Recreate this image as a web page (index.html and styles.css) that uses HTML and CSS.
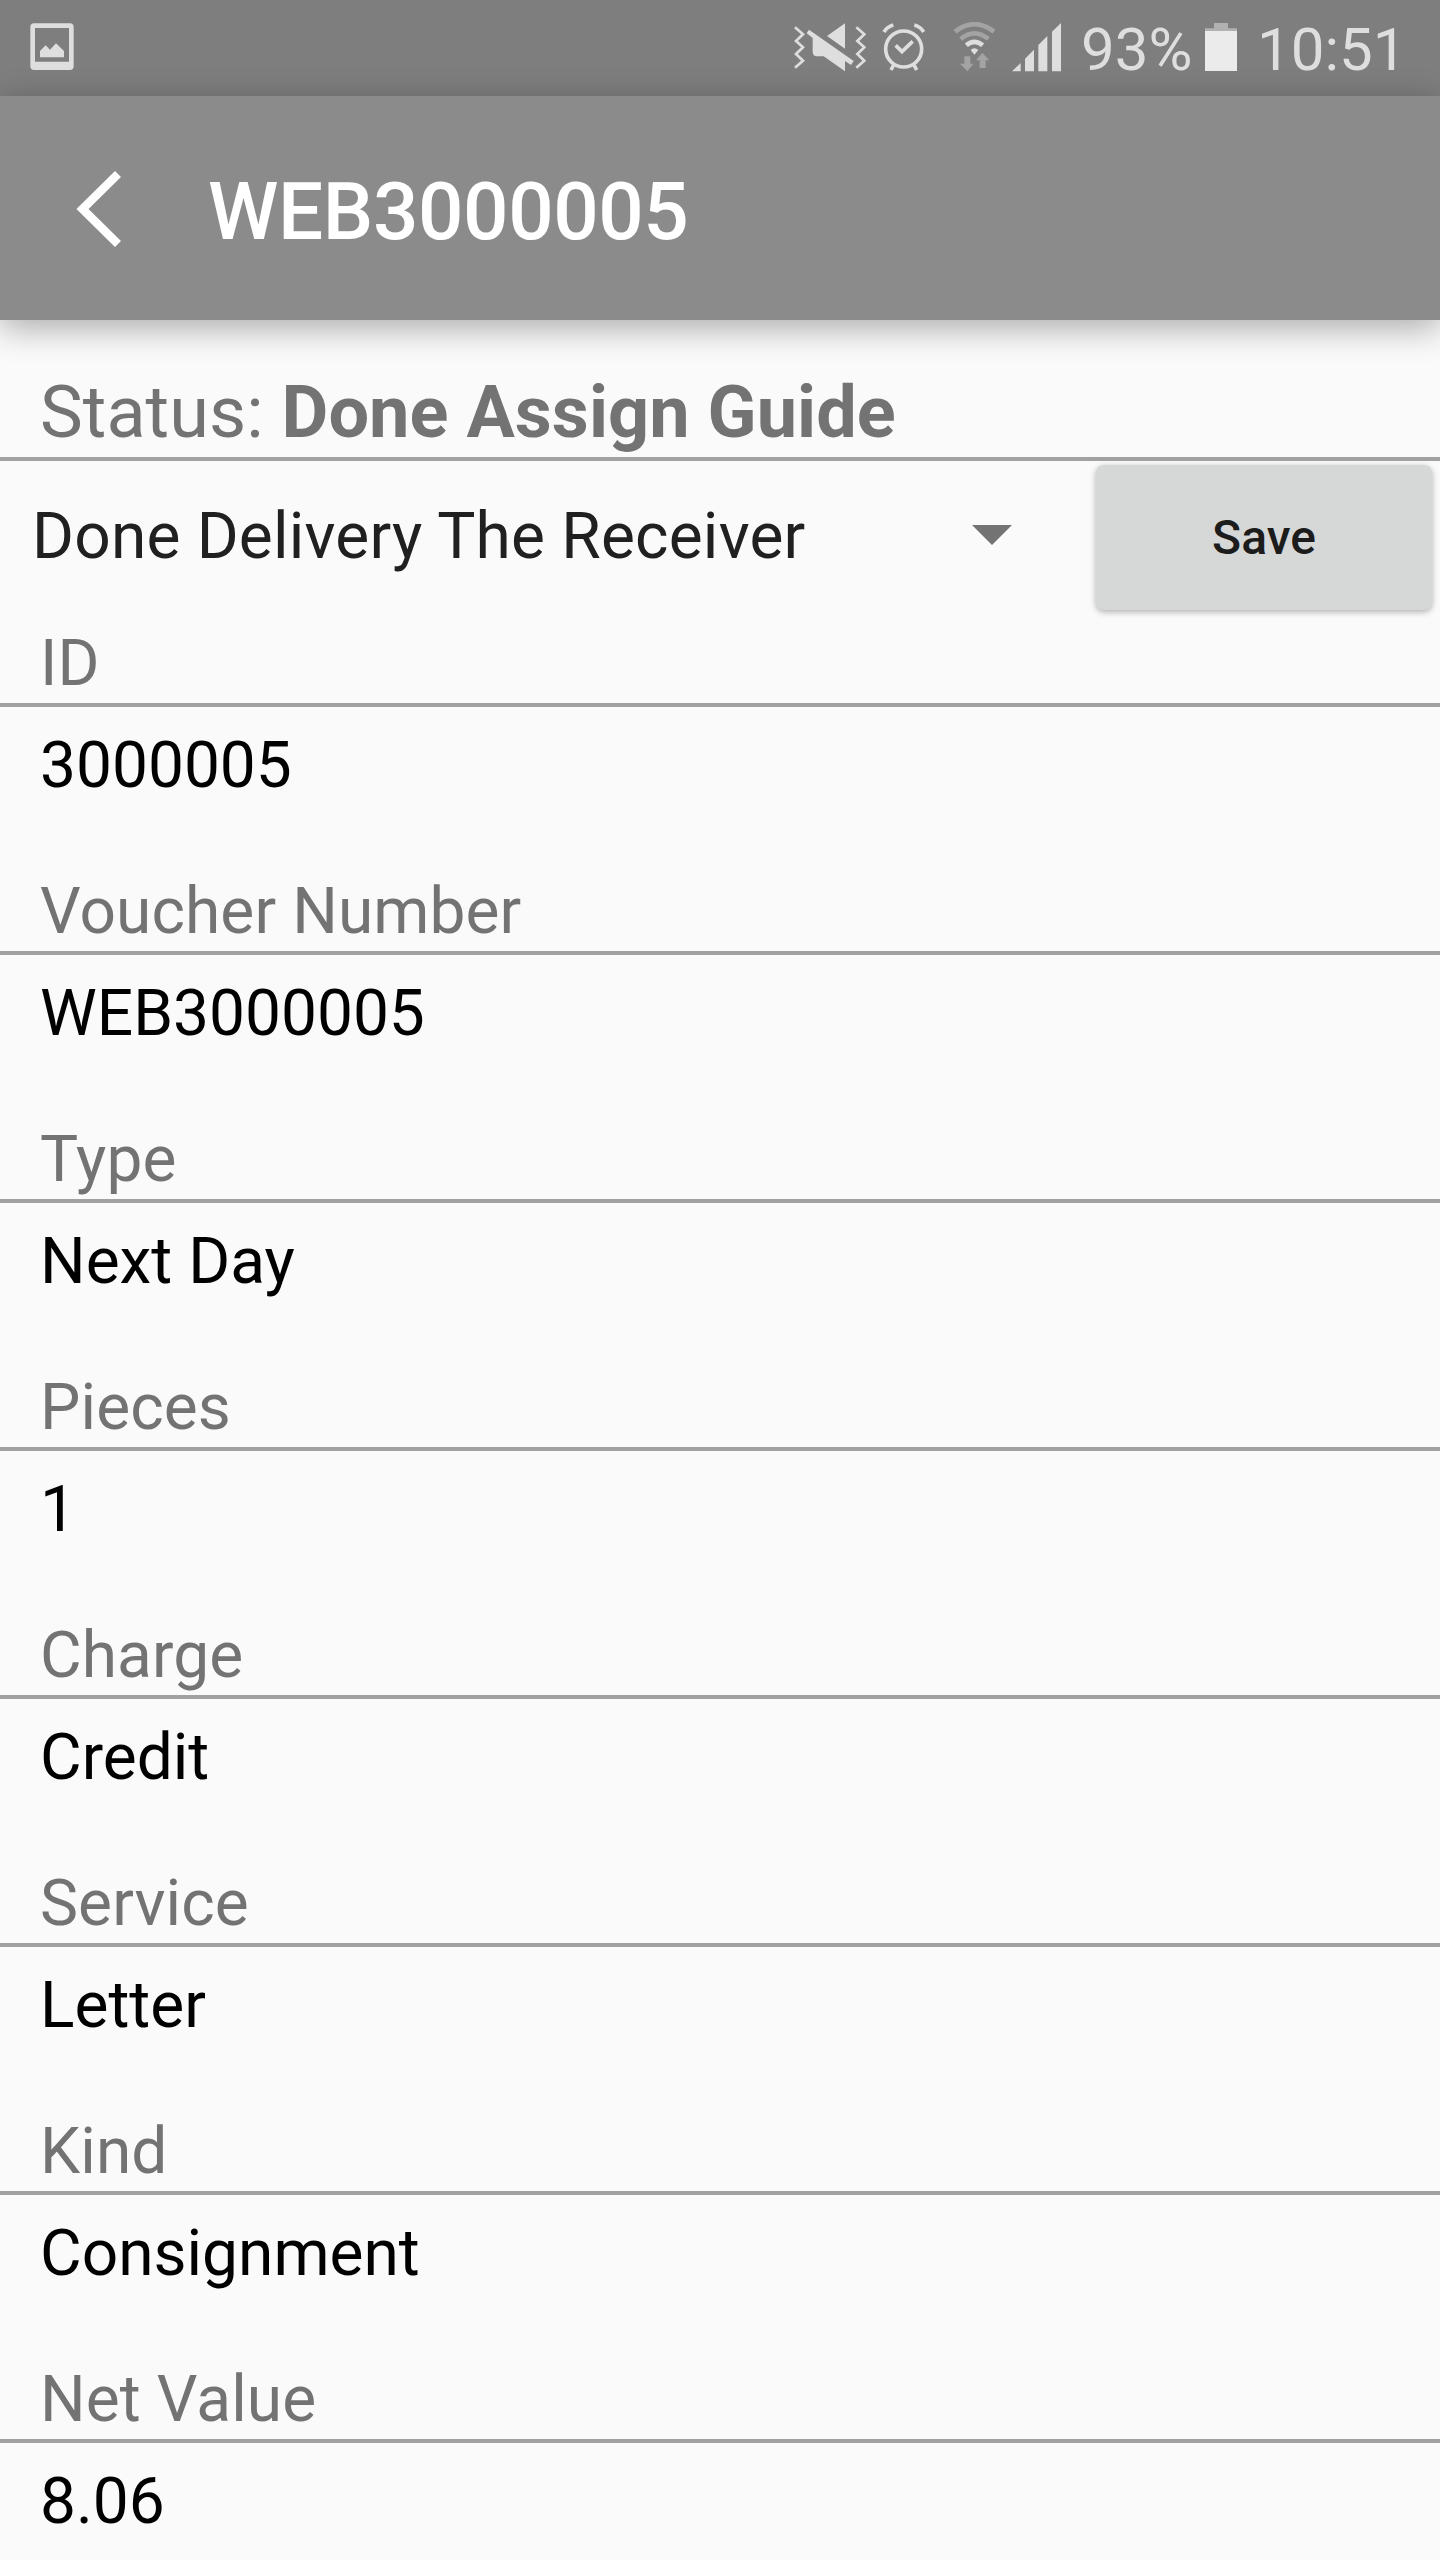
FILE: index.html
```html
<!DOCTYPE html>
<html lang="en">
<head>
    <meta charset="UTF-8">
    <meta name="viewport" content="width=device-width, initial-scale=1.0">
    <title>WEB3000005</title>
    <link rel="stylesheet" href="styles.css">
</head>
<body>
    <div class="status-bar">
        <svg class="icon-picture" width="44" height="48" viewBox="0 0 132 144">
            <path fill-rule="evenodd" d="M12 1H120Q131 1 131 12V130Q131 141 120 141H12Q1 141 1 130V12Q1 1 12 1ZM15 15V116H117V15Z"/>
            <path d="M30 103V84L47 67L60 80L78 61L102 84V103Z"/>
        </svg>
        <div class="status-right">
            <!-- muted / vibrate -->
            <svg class="icon-mute" width="72" height="49" viewBox="0 0 216 147">
                <path class="line" d="M3 13L27 34L6 54L27 73L6 93L27 113L3 134"/>
                <path class="line" d="M187 13L211 34L190 54L211 73L190 93L211 113L187 134"/>
                <path d="M153 1V77L99 39Z"/>
                <path d="M45 20L179 114L171 126L153 114V145L89 100H68Q56 98 56 86V45L38 31Z"/>
            </svg>
            <!-- alarm -->
            <svg class="icon-alarm" width="44" height="49" viewBox="0 0 132 147">
                <circle class="line-thick" cx="65" cy="78" r="54"/>
                <path class="line-thick" d="M41 67L60 86L92 55M35 126L27 141M96 126L104 141"/>
                <path class="line-thick" d="M6 27Q15 11 34 6M125 27Q116 11 97 6"/>
            </svg>
            <!-- wifi -->
            <svg class="icon-wifi" width="44" height="50" viewBox="0 0 132 150">
                <g class="dim-line">
                    <path d="M6 29Q64 -16 123 29"/>
                    <path d="M23 51Q64 17 106 51"/>
                </g>
                <path class="arc" d="M40 70Q64 49 89 70"/>
                <path d="M53 84Q64 74 76 84L64 98Z"/>
                <g class="dim">
                    <path d="M34 103H52V125H62L43 148L21 125H34Z"/>
                    <path d="M80 138V115H69L88 92L109 115H98V138Z"/>
                </g>
            </svg>
            <!-- mobile signal -->
            <svg class="icon-signal" width="50" height="49" viewBox="0 0 150 147">
                <path d="M0 145L26 120V145ZM39 145V107L66 80V145ZM79 145V66L106 39V145ZM120 145V26L147 0V145Z"/>
            </svg>
            <span class="battery-text">93%</span>
            <svg class="icon-battery" width="32" height="48" viewBox="0 0 96 144">
                <path class="battery-top" d="M27 0H69V16H96V26H0V16H27Z"/>
                <path class="battery-fill" d="M0 24H96V144H0Z"/>
            </svg>
            <span class="clock">10:51</span>
        </div>
    </div>

    <div class="app-bar">
        <svg class="icon-back" width="46" height="78" viewBox="0 0 46 78">
            <path d="M42 5L6.500 40L42 75"/>
        </svg>
        <h1>WEB3000005</h1>
    </div>

    <div class="content">
        <div class="status">Status: <b>Done Assign Guide</b></div>
        <div class="action-row">
            <div class="spinner">
                <span>Done Delivery The Receiver</span>
                <svg width="40" height="20" viewBox="0 0 40 20"><path d="M0 0H40L20 20Z"/></svg>
            </div>
            <button class="save">Save</button>
        </div>

        <div class="field"><div class="label">ID</div><div class="value">3000005</div></div>
        <div class="field"><div class="label">Voucher Number</div><div class="value">WEB3000005</div></div>
        <div class="field"><div class="label">Type</div><div class="value">Next Day</div></div>
        <div class="field"><div class="label">Pieces</div><div class="value">1</div></div>
        <div class="field"><div class="label">Charge</div><div class="value">Credit</div></div>
        <div class="field"><div class="label">Service</div><div class="value">Letter</div></div>
        <div class="field"><div class="label">Kind</div><div class="value">Consignment</div></div>
        <div class="field"><div class="label">Net Value</div><div class="value">8.06</div></div>
    </div>
</body>
</html>
```
FILE: styles.css
```css
* {
    box-sizing: border-box;
}
body {
    margin: 0;
    height: 2560px;
    overflow: hidden;
    background: #fafafa;
    font-family: Roboto, sans-serif;
}
svg {
    display: block;
    flex-shrink: 0;
}

/* system status bar */
.status-bar {
    display: flex;
    justify-content: space-between;
    align-items: flex-start;
    height: 96px;
    padding: 0 39px 0 30px;
    background: #7e7e7e;
    color: #dedede;
    fill: #dedede;
    font-size: 60px;
    line-height: 70px;
}
.icon-picture {
    margin-top: 23px;
}
.status-right {
    display: flex;
    align-items: flex-start;
    padding-top: 23px;
}
.icon-alarm {
    margin-left: 16px;
}
.icon-wifi {
    margin-left: 27px;
    margin-top: -1px;
}
.icon-signal {
    margin-left: 15px;
}
.battery-text {
    width: 112px;
    margin: -8px 0 0 19px;
}
.icon-battery {
    margin-left: 12px;
}
.clock {
    width: 144px;
    margin: -8px 0 0 20px;
}
.line, .line-thick, .dim-line, .arc {
    fill: none;
    stroke: #dedede;
    stroke-width: 8;
}
.line-thick {
    stroke-width: 11;
}
.dim-line {
    stroke: #a3a3a3;
    stroke-width: 14;
}
.arc {
    stroke-width: 14;
}
.dim {
    fill: #a3a3a3;
}
.battery-top {
    fill: #b1b1b1;
}
.battery-fill {
    fill: #ebebeb;
}

/* title bar */
.app-bar {
    position: relative;
    z-index: 1;
    display: flex;
    align-items: center;
    height: 224px;
    padding-left: 76px;
    background: #8b8b8b;
    box-shadow: 0 8px 32px rgba(0, 0, 0, 0.32);
}
.icon-back {
    fill: none;
    stroke: #fff;
    stroke-width: 8.5;
}
.app-bar h1 {
    margin: 8px 0 0 86px;
    color: #fff;
    font-size: 80px;
    font-weight: 500;
    line-height: 94px;
    letter-spacing: -0.4px;
}

.status {
    height: 141px;
    padding: 51px 40px 0;
    border-bottom: 4px solid #a1a1a1;
    color: #737373;
    font-size: 72px;
    line-height: 84px;
    letter-spacing: 0.05px;
}
.action-row {
    display: flex;
    height: 164px;
}
.spinner {
    display: flex;
    justify-content: space-between;
    align-items: flex-start;
    width: 1012px;
    padding: 38px 0 0 32px;
    color: #202020;
    font-size: 64px;
    line-height: 76px;
    letter-spacing: 0.2px;
}
.spinner svg {
    margin-top: 26px;
    fill: #737373;
}
.save {
    width: 336px;
    height: 145px;
    margin: 4px 0 0 84px;
    padding: 0;
    border: none;
    border-radius: 8px;
    background: #d6d8d7;
    box-shadow: 0 2px 6px rgba(0, 0, 0, 0.3);
    color: #1c1c1c;
    font-family: Roboto, sans-serif;
    font-size: 48px;
    font-weight: 500;
}

/* label / value pairs */
.field {
    height: 248px;
    font-size: 64px;
    line-height: 76px;
}
.label {
    height: 82px;
    padding: 1px 40px 0;
    border-bottom: 4px solid #a1a1a1;
    color: #737373;
    letter-spacing: 0.1px;
}
.value {
    padding: 21px 40px 0;
    color: #000;
}
```
